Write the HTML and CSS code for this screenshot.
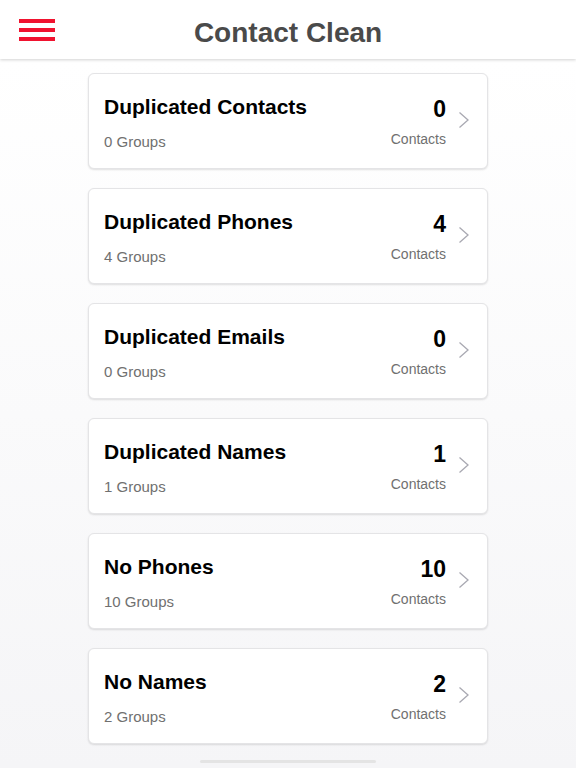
FILE: index.html
```html
<!DOCTYPE html>
<html lang="en">
<head>
  <meta charset="UTF-8" />
  <meta name="viewport" content="width=device-width, initial-scale=1.0"/>
  <title>Contact Clean</title>
  <link rel="stylesheet" href="styles.css">
</head>
<body>
  <header class="topbar">
    <button class="menu-btn" aria-label="Menu">
      <span></span><span></span><span></span>
    </button>
    <h1 class="title">Contact Clean</h1>
  </header>

  <main class="list">
    <a class="card" href="#">
      <div class="card-left">
        <div class="card-title">Duplicated Contacts</div>
        <div class="card-sub">0 Groups</div>
      </div>
      <div class="card-right">
        <div class="count">0</div>
        <div class="count-label">Contacts</div>
      </div>
      <svg class="chevron" viewBox="0 0 12 18" width="12" height="18"><path d="M1.5 1.5 L10 9 L1.5 16.5" fill="none" stroke="currentColor" stroke-width="1.3"/></svg>
    </a>

    <a class="card" href="#">
      <div class="card-left">
        <div class="card-title">Duplicated Phones</div>
        <div class="card-sub">4 Groups</div>
      </div>
      <div class="card-right">
        <div class="count">4</div>
        <div class="count-label">Contacts</div>
      </div>
      <svg class="chevron" viewBox="0 0 12 18" width="12" height="18"><path d="M1.5 1.5 L10 9 L1.5 16.5" fill="none" stroke="currentColor" stroke-width="1.3"/></svg>
    </a>

    <a class="card" href="#">
      <div class="card-left">
        <div class="card-title">Duplicated Emails</div>
        <div class="card-sub">0 Groups</div>
      </div>
      <div class="card-right">
        <div class="count">0</div>
        <div class="count-label">Contacts</div>
      </div>
      <svg class="chevron" viewBox="0 0 12 18" width="12" height="18"><path d="M1.5 1.5 L10 9 L1.5 16.5" fill="none" stroke="currentColor" stroke-width="1.3"/></svg>
    </a>

    <a class="card" href="#">
      <div class="card-left">
        <div class="card-title">Duplicated Names</div>
        <div class="card-sub">1 Groups</div>
      </div>
      <div class="card-right">
        <div class="count">1</div>
        <div class="count-label">Contacts</div>
      </div>
      <svg class="chevron" viewBox="0 0 12 18" width="12" height="18"><path d="M1.5 1.5 L10 9 L1.5 16.5" fill="none" stroke="currentColor" stroke-width="1.3"/></svg>
    </a>

    <a class="card" href="#">
      <div class="card-left">
        <div class="card-title">No Phones</div>
        <div class="card-sub">10 Groups</div>
      </div>
      <div class="card-right">
        <div class="count">10</div>
        <div class="count-label">Contacts</div>
      </div>
      <svg class="chevron" viewBox="0 0 12 18" width="12" height="18"><path d="M1.5 1.5 L10 9 L1.5 16.5" fill="none" stroke="currentColor" stroke-width="1.3"/></svg>
    </a>

    <a class="card" href="#">
      <div class="card-left">
        <div class="card-title">No Names</div>
        <div class="card-sub">2 Groups</div>
      </div>
      <div class="card-right">
        <div class="count">2</div>
        <div class="count-label">Contacts</div>
      </div>
      <svg class="chevron" viewBox="0 0 12 18" width="12" height="18"><path d="M1.5 1.5 L10 9 L1.5 16.5" fill="none" stroke="currentColor" stroke-width="1.3"/></svg>
    </a>
  </main>

  <div class="home-indicator"></div>
</body>
</html>
```

FILE: styles.css
```css
* { box-sizing: border-box; margin: 0; padding: 0; }

body {
  font-family: 'Liberation Sans', Arial, sans-serif;
  background: linear-gradient(#ffffff 60px, #f5f5f7 100%);
  height: 100vh;
  overflow: hidden;
  display: flex;
  flex-direction: column;
  align-items: center;
  position: relative;
}

.topbar {
  width: 100%;
  height: 59px;
  background: #fff;
  box-shadow: 0 1px 3px rgba(0, 0, 0, 0.18);
  display: flex;
  align-items: center;
  justify-content: center;
  position: relative;
  z-index: 2;
}

.menu-btn {
  position: absolute;
  left: 19px;
  top: 19px;
  width: 36px;
  height: 22px;
  border: none;
  background: none;
  display: flex;
  flex-direction: column;
  justify-content: space-between;
  cursor: pointer;
}

.menu-btn span {
  display: block;
  height: 4px;
  width: 100%;
  background: #f0132f;
}

.title {
  font-size: 28px;
  font-weight: bold;
  color: #4a4a4a;
  margin-top: 7px;
}

.list {
  width: 400px;
  padding-top: 14px;
  display: flex;
  flex-direction: column;
  gap: 19px;
}

.card {
  height: 96px;
  background: #fff;
  border: 1px solid #e4e4e6;
  border-radius: 6px;
  box-shadow: 0 1px 2px rgba(0, 0, 0, 0.12);
  display: flex;
  align-items: center;
  padding: 0 17px 0 15px;
  text-decoration: none;
  color: #000;
}

.card-left {
  flex-grow: 1;
  padding-top: 4px;
}

.card-title {
  font-size: 21px;
  font-weight: bold;
  margin-top: -1px;
}

.card-sub {
  font-size: 15px;
  color: #707070;
  margin-top: 14px;
}

.card-right {
  text-align: right;
}

.count {
  font-size: 23px;
  font-weight: bold;
}

.count-label {
  font-size: 14px;
  color: #707070;
  margin-top: 8px;
}

.chevron {
  color: #a9a9b2;
  margin-left: 12px;
  margin-bottom: 2px;
}

.home-indicator {
  position: absolute;
  bottom: 5px;
  left: 200px;
  width: 176px;
  height: 3px;
  border-radius: 2px;
  background: #e4e4e4;
}
```
